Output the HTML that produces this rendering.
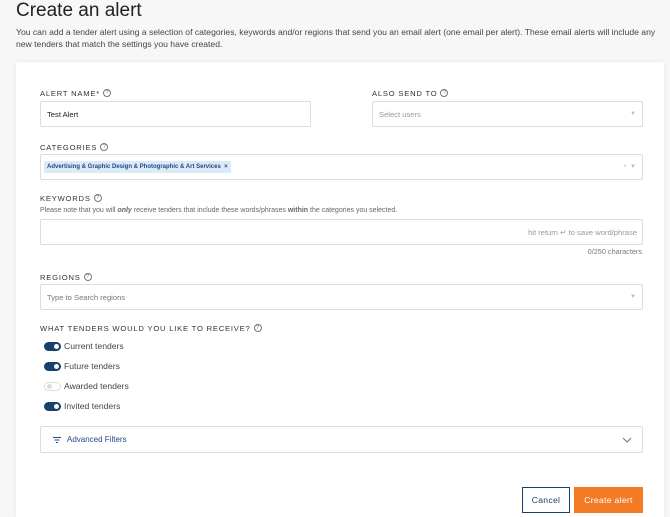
<!DOCTYPE html>
<html><head><style>
*{box-sizing:border-box;margin:0;padding:0}
html,body{width:670px;height:517px;overflow:hidden}
body{background:#f7f7f7;font-family:"Liberation Sans",sans-serif;color:#333;position:relative}
.a{position:absolute}
h1{position:absolute;left:16px;top:0px;font-size:19px;font-weight:normal;color:#222}
.p{left:16px;top:26px;width:645px;font-size:8.6px;line-height:12px;color:#444}
.card{left:16px;top:62px;width:648px;height:455px;background:#fff;border-radius:3px 3px 0 0;box-shadow:0 0 3px rgba(0,0,0,.08)}
.lbl{font-size:7.6px;letter-spacing:.8px;color:#333;line-height:9px;white-space:nowrap}
.q{display:inline-block;width:8px;height:8px;border:1px solid #777;border-radius:50%;font-size:5.5px;text-align:center;line-height:6px;letter-spacing:0;vertical-align:top;margin-left:3px;color:#777}
.in{border:1px solid #ddd;border-radius:2px;background:#fff;font-size:7.6px;color:#999;padding-left:6px;display:flex;align-items:center}
.tg{width:17px;height:9px;border-radius:5px;background:#17406d;left:44px}
.tg::after{content:"";position:absolute;right:2px;top:2px;width:5px;height:5px;border-radius:50%;background:#fff}
.tg.off{background:#fff;border:1px solid #ddd}
.tg.off::after{left:2px;top:1px;background:#ddd}
.tl{left:64px;font-size:8.6px;color:#444}
.arr{position:absolute;right:6px;font-size:6px;color:#bbb}
</style></head><body>
<h1>Create an alert</h1>
<div class="a p">You can add a tender alert using a selection of categories, keywords and/or regions that send you an email alert (one email per alert). These email alerts will include any new tenders that match the settings you have created.</div>
<div class="a card"></div>
<div class="a lbl" style="left:40px;top:89px">ALERT NAME*<span class="q">?</span></div>
<div class="a lbl" style="left:372px;top:89px">ALSO SEND TO<span class="q">?</span></div>
<div class="a in" style="left:40px;top:101px;width:271px;height:26px;color:#222">Test Alert</div>
<div class="a in" style="left:372px;top:101px;width:271px;height:26px">Select users<span class="arr">▼</span></div>
<div class="a lbl" style="left:40px;top:143px">CATEGORIES<span class="q">?</span></div>
<div class="a in" style="left:40px;top:154px;width:603px;height:26px;padding-left:3px"><span style="background:#dce9f6;color:#1d4a86;font-size:6px;font-weight:bold;padding:3px 3px">Advertising &amp; Graphic Design &amp; Photographic &amp; Art Services &nbsp;×</span><span class="arr" style="right:6px">× &nbsp;▼</span></div>
<div class="a lbl" style="left:40px;top:194px">KEYWORDS<span class="q">?</span></div>
<div class="a" style="left:40px;top:207px;font-size:7px;color:#666">Please note that you will <b><i>only</i></b> receive tenders that include these words/phrases <b>within</b> the categories you selected.</div>
<div class="a in" style="left:40px;top:219px;width:603px;height:26px;justify-content:flex-end;padding-right:5px">hit return ↵ to save word/phrase</div>
<div class="a" style="right:28px;top:247px;font-size:7.3px;color:#777">0/250 characters</div>
<div class="a lbl" style="left:40px;top:273px">REGIONS<span class="q">?</span></div>
<div class="a in" style="left:40px;top:284px;width:603px;height:26px;color:#777">Type to Search regions<span class="arr">▼</span></div>
<div class="a lbl" style="left:40px;top:324px;color:#333">WHAT TENDERS WOULD YOU LIKE TO RECEIVE?<span class="q">?</span></div>
<div class="a tg" style="top:342px"></div><div class="a tl" style="top:341px">Current tenders</div>
<div class="a tg" style="top:362px"></div><div class="a tl" style="top:361px">Future tenders</div>
<div class="a tg off" style="top:382px"></div><div class="a tl" style="top:381px">Awarded tenders</div>
<div class="a tg" style="top:402px"></div><div class="a tl" style="top:401px">Invited tenders</div>
<div class="a in" style="left:40px;top:426px;width:603px;height:27px;padding-left:12px;color:#1d4a86;font-size:8px"><svg width="8" height="6" viewBox="0 0 8 6" style="margin-right:6px"><path d="M0 0.5H8M1.5 3H6.5M3 5.5H5" stroke="#1d4a86" stroke-width="1"/></svg>Advanced Filters<svg class="arr" style="right:10px" width="10" height="6" viewBox="0 0 10 6"><path d="M1 1L5 5L9 1" fill="none" stroke="#777" stroke-width="1"/></svg></div>
<div class="a" style="left:522px;top:487px;width:48px;height:26px;border:1px solid #17406d;background:#fff;color:#17406d;font-size:8.6px;text-align:center;line-height:24px;letter-spacing:.3px">Cancel</div>
<div class="a" style="left:574px;top:487px;width:69px;height:26px;background:#f47b25;color:#fff;font-size:8.6px;text-align:center;line-height:26px;letter-spacing:.3px">Create alert</div>
</body></html>
